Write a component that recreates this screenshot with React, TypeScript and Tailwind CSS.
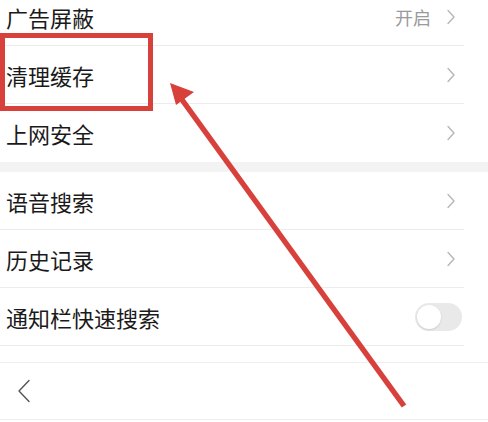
import React from 'react'

const font = { fontFamily: '"Noto Sans CJK SC", "Noto Sans", sans-serif' }

function Chevron() {
  return (
    <svg className="w-[10px] h-[16px] text-[#b4b4b4]" viewBox="0 0 10 16" fill="none" stroke="currentColor">
      <path d="M2 1.5l6 6.5-6 6.5" strokeWidth={1.3} strokeLinecap="round" strokeLinejoin="round" />
    </svg>
  )
}

function Toggle() {
  return (
    <div className="w-[47px] h-[28px] rounded-full bg-[#e9e9e9] flex items-center px-[2px]">
      <div className="w-[24px] h-[24px] rounded-full bg-white shadow-[0_1px_2px_rgba(0,0,0,0.12)]" />
    </div>
  )
}

function Row({ label, value, first, last }: { label: string; value?: string; first?: boolean; last?: boolean }) {
  return (
    <div
      className={`flex items-center pl-[6px] pr-[8px] ${first ? 'h-[46px] pb-[12px]' : 'h-[58px]'} ${
        last ? '' : 'border-b border-[#ececec]'
      }`}
    >
      <span className="flex-1 text-[22px] text-[#1a1a1a] leading-none">{label}</span>
      {value && <span className="text-[18px] text-[#9a9a9a] mr-[15px] leading-none">{value}</span>}
      <Chevron />
    </div>
  )
}

export default function App() {
  return (
    <div className="relative w-[488px] h-[422px] bg-white overflow-hidden" style={font}>
      <div className="pr-[24px]">
        <Row label="广告屏蔽" value="开启" first />
        <Row label="清理缓存" />
        <Row label="上网安全" last />
      </div>
      <div className="h-[10px] bg-[#f3f3f3]" />
      <div className="pr-[24px]">
        <Row label="语音搜索" />
        <Row label="历史记录" />
        <div className="flex items-center pl-[6px] pr-[2px] h-[58px] border-b border-[#ececec]">
          <span className="flex-1 text-[22px] text-[#1a1a1a] leading-none">通知栏快速搜索</span>
          <Toggle />
        </div>
      </div>
      <div className="h-[16px]" />
      <div className="h-[58px] border-t border-b border-[#eeeeee] flex items-center pl-[17px]">
        <svg className="w-[14px] h-[24px] text-[#555555]" viewBox="0 0 14 24" fill="none" stroke="currentColor">
          <path d="M12 1.5L2 12l10 10.5" strokeWidth={1.4} strokeLinecap="round" strokeLinejoin="round" />
        </svg>
      </div>

      {/* annotation */}
      <div className="absolute left-0 top-[33px] w-[153px] h-[78px] border-[5px] border-[#d8403b]" />
      <svg className="absolute inset-0 pointer-events-none" width="488" height="422" viewBox="0 0 488 422">
        <line x1="404" y1="406" x2="180" y2="97" stroke="#d8403b" strokeWidth="5.5" strokeLinecap="butt" />
        <polygon points="170,83 194,92 176,105" fill="#d8403b" />
      </svg>
    </div>
  )
}
